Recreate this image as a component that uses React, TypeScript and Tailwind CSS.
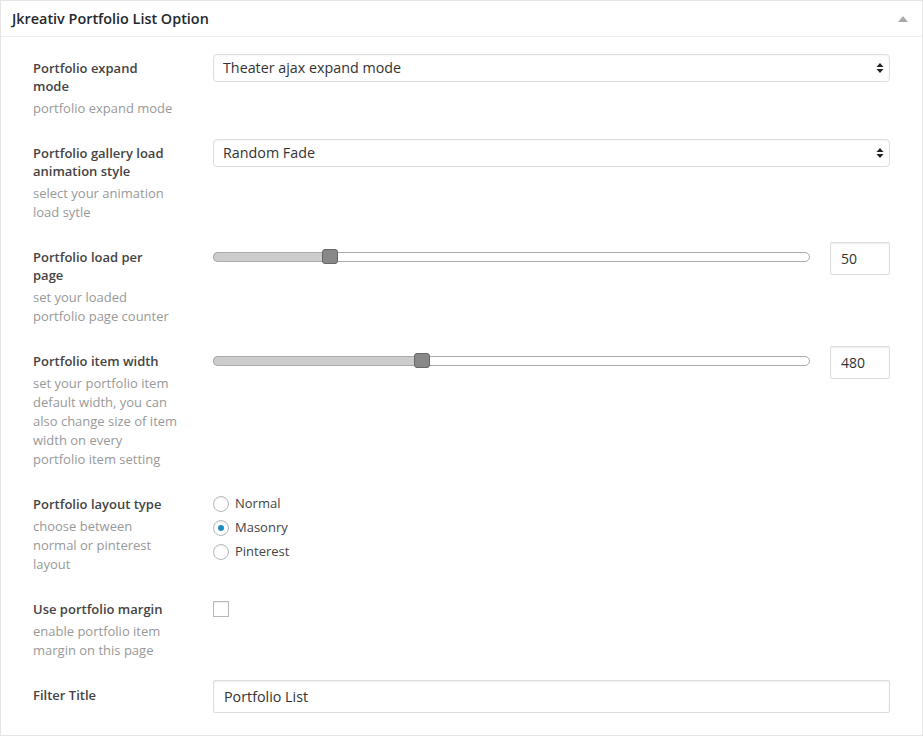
import React from "react";

const font = { fontFamily: '"Open Sans", "Liberation Sans", sans-serif' };

function SelectBox({ value }: { value: string }) {
  return (
    <div className="flex h-[28px] w-[677px] items-center justify-between rounded-[4px] border border-[#dddddd] bg-white pl-[9px] pr-[5px] text-[14.3px] text-[#333333] shadow-[inset_0_1px_2px_rgba(0,0,0,0.04)]">
      <span>{value}</span>
      <svg width="8" height="12" viewBox="0 0 8 12">
        <path d="M4 1 L7.5 5 L0.5 5 Z" fill="#222" />
        <path d="M4 11 L7.5 7 L0.5 7 Z" fill="#222" />
      </svg>
    </div>
  );
}

function Slider({ pct, value }: { pct: number; value: string }) {
  return (
    <div className="flex w-[677px] items-center justify-between">
      <div className="relative h-[33px] w-[597px]">
        <div className="absolute left-0 right-0 top-[10px] h-[10px] rounded-full border border-[#aaaaaa] bg-white" />
        <div
          className="absolute left-0 top-[10px] h-[10px] rounded-l-full border border-r-0 border-[#aaaaaa] bg-[#cccccc]"
          style={{ width: `${pct}%` }}
        />
        <div
          className="absolute top-[7px] h-[15px] w-[16px] -translate-x-1/2 rounded-[3px] border border-[#666666] bg-[#888888]"
          style={{ left: `${pct}%` }}
        />
      </div>
      <div className="flex h-[33px] w-[60px] items-center rounded-[2px] border border-[#dddddd] bg-white pl-[10px] text-[14px] text-[#333333] shadow-[inset_0_1px_2px_rgba(0,0,0,0.07)]">
        {value}
      </div>
    </div>
  );
}

function Radio({ label, checked }: { label: string; checked?: boolean }) {
  return (
    <div className="flex h-[24px] items-center gap-[6px] text-[13px] text-[#444444]">
      <span className="flex h-[16px] w-[16px] items-center justify-center rounded-full border border-[#b4b9be] bg-white shadow-[inset_0_1px_2px_rgba(0,0,0,0.07)]">
        {checked && <span className="h-[6px] w-[6px] rounded-full bg-[#1e8cbe]" />}
      </span>
      <span>{label}</span>
    </div>
  );
}

type Row = {
  label: string[];
  desc: string[];
  control: React.ReactNode;
  offset: string;
};

export default function App() {
  const rows: Row[] = [
    {
      label: ["Portfolio expand", "mode"],
      desc: ["portfolio expand mode"],
      control: <SelectBox value="Theater ajax expand mode" />,
      offset: "mt-[-5px]",
    },
    {
      label: ["Portfolio gallery load", "animation style"],
      desc: ["select your animation", "load sytle"],
      control: <SelectBox value="Random Fade" />,
      offset: "mt-[-5px]",
    },
    {
      label: ["Portfolio load per", "page"],
      desc: ["set your loaded", "portfolio page counter"],
      control: <Slider pct={19.6} value="50" />,
      offset: "mt-[-6px]",
    },
    {
      label: ["Portfolio item width"],
      desc: [
        "set your portfolio item",
        "default width, you can",
        "also change size of item",
        "width on every",
        "portfolio item setting",
      ],
      control: <Slider pct={35} value="480" />,
      offset: "mt-[-6px]",
    },
    {
      label: ["Portfolio layout type"],
      desc: ["choose between", "normal or pinterest", "layout"],
      control: (
        <div className="flex flex-col">
          <Radio label="Normal" />
          <Radio label="Masonry" checked />
          <Radio label="Pinterest" />
        </div>
      ),
      offset: "mt-[-3px]",
    },
    {
      label: ["Use portfolio margin"],
      desc: ["enable portfolio item", "margin on this page"],
      control: (
        <span className="block h-[16px] w-[16px] border border-[#b4b9be] bg-white shadow-[inset_0_1px_2px_rgba(0,0,0,0.07)]" />
      ),
      offset: "mt-[1px]",
    },
    {
      label: ["Filter Title"],
      desc: [],
      control: (
        <div className="flex h-[33px] w-[677px] items-center rounded-[2px] border border-[#dddddd] bg-white pl-[10px] text-[14.3px] text-[#333333] shadow-[inset_0_1px_2px_rgba(0,0,0,0.07)]">
          Portfolio List
        </div>
      ),
      offset: "mt-[-6px]",
    },
  ];

  return (
    <div className="h-[736px] w-[923px] bg-white" style={font}>
      <div className="h-[736px] border border-[#e5e5e5] bg-white">
        <div className="flex h-[36px] items-center justify-between border-b border-[#eeeeee] pl-[11px] pr-[14px]">
          <span className="text-[14.4px] font-semibold text-[#23282d]">Jkreativ Portfolio List Option</span>
          <svg width="10" height="6" viewBox="0 0 10 6">
            <path d="M5 0 L10 6 L0 6 Z" fill="#aaaaaa" />
          </svg>
        </div>
        <div className="flex flex-col gap-[10px] pl-[32px] pt-[14px]">
          {rows.map((r) => (
            <div key={r.label.join(" ")} className="flex py-[8px]">
              <div className="w-[180px] shrink-0">
                <div className="text-[13px] font-semibold leading-[18px] text-[#444444]">
                  {r.label.map((l) => (
                    <div key={l}>{l}</div>
                  ))}
                </div>
                {r.desc.length > 0 && (
                  <div className="mt-[4px] text-[13px] leading-[19px] text-[#999999]">
                    {r.desc.map((d) => (
                      <div key={d}>{d}</div>
                    ))}
                  </div>
                )}
              </div>
              <div className={r.offset}>{r.control}</div>
            </div>
          ))}
        </div>
      </div>
    </div>
  );
}
